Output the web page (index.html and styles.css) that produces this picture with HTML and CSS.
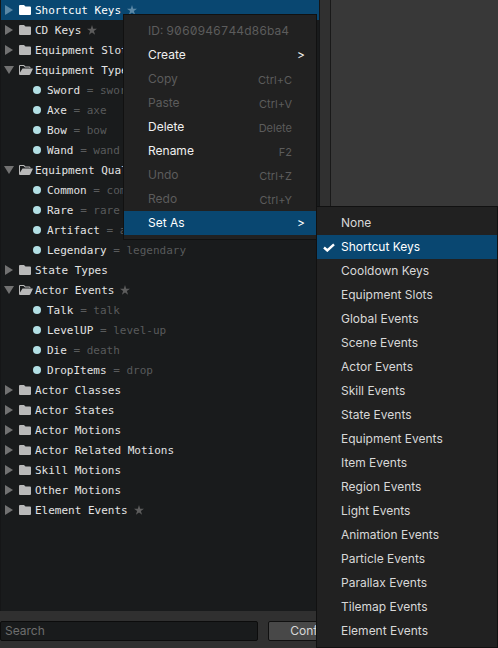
FILE: index.html
```html
<!DOCTYPE html>
<html lang="en">
<head>
<meta charset="utf-8">
<title>Attributes</title>
<link rel="stylesheet" href="styles.css">
</head>
<body>
<svg class="symbols" aria-hidden="true">
  <symbol id="closed" viewBox="0 0 10 10"><path d="M1 0L9 5L1 10Z"/></symbol>
  <symbol id="open" viewBox="0 0 10 8"><path d="M0 0H10L5 8Z"/></symbol>
  <symbol id="folder" viewBox="0 0 14 10"><path d="M0 1Q0 0 1 0H5L6.500 1.500H11Q12 1.500 12 2.500V9Q12 10 11 10H1Q0 10 0 9Z"/></symbol>
  <symbol id="folder-open" viewBox="0 0 14 10"><path d="M0 1Q0 0 1 0H5L6.500 1.500H10.500Q11.500 1.500 11.500 3H10.500V2.500H6L4.500 1H1V7.500L3.500 3.500H13.500Q14 3.500 13.700 4.200L11.300 9.300Q11 10 10.200 10H1Q0 10 0 9Z"/></symbol>
  <symbol id="star" viewBox="0 0 10 10"><path d="M5 0L6.200 3.700H10L6.900 6L8.100 9.700L5 7.400L1.900 9.700L3.100 6L0 3.700H3.800Z"/></symbol>
  <symbol id="check" viewBox="0 0 12 9"><path d="M1 4.500L4.300 7.500L11 1.300" fill="none" stroke="currentColor" stroke-width="2.400"/></symbol>
</svg>
<main class="window">
  <section class="sidebar">
    <ul class="tree">
      <li class="row selected"><svg class="arrow"><use href="#closed"/></svg><svg class="folder"><use href="#folder"/></svg><span>Shortcut Keys</span><svg class="star"><use href="#star"/></svg></li>
      <li class="row"><svg class="arrow"><use href="#closed"/></svg><svg class="folder"><use href="#folder"/></svg><span>CD Keys</span><svg class="star"><use href="#star"/></svg></li>
      <li class="row"><svg class="arrow"><use href="#closed"/></svg><svg class="folder"><use href="#folder"/></svg><span>Equipment Slots</span></li>
      <li class="row"><svg class="arrow"><use href="#open"/></svg><svg class="folder"><use href="#folder-open"/></svg><span>Equipment Types</span></li>
      <li class="row leaf"><i class="dot"></i><span>Sword <em>= sword</em></span></li>
      <li class="row leaf"><i class="dot"></i><span>Axe <em>= axe</em></span></li>
      <li class="row leaf"><i class="dot"></i><span>Bow <em>= bow</em></span></li>
      <li class="row leaf"><i class="dot"></i><span>Wand <em>= wand</em></span></li>
      <li class="row"><svg class="arrow"><use href="#open"/></svg><svg class="folder"><use href="#folder-open"/></svg><span>Equipment Qualities</span></li>
      <li class="row leaf"><i class="dot"></i><span>Common <em>= common</em></span></li>
      <li class="row leaf"><i class="dot"></i><span>Rare <em>= rare</em></span></li>
      <li class="row leaf"><i class="dot"></i><span>Artifact <em>= artifact</em></span></li>
      <li class="row leaf"><i class="dot"></i><span>Legendary <em>= legendary</em></span></li>
      <li class="row"><svg class="arrow"><use href="#closed"/></svg><svg class="folder"><use href="#folder"/></svg><span>State Types</span></li>
      <li class="row"><svg class="arrow"><use href="#open"/></svg><svg class="folder"><use href="#folder-open"/></svg><span>Actor Events</span><svg class="star"><use href="#star"/></svg></li>
      <li class="row leaf"><i class="dot"></i><span>Talk <em>= talk</em></span></li>
      <li class="row leaf"><i class="dot"></i><span>LevelUP <em>= level-up</em></span></li>
      <li class="row leaf"><i class="dot"></i><span>Die <em>= death</em></span></li>
      <li class="row leaf"><i class="dot"></i><span>DropItems <em>= drop</em></span></li>
      <li class="row"><svg class="arrow"><use href="#closed"/></svg><svg class="folder"><use href="#folder"/></svg><span>Actor Classes</span></li>
      <li class="row"><svg class="arrow"><use href="#closed"/></svg><svg class="folder"><use href="#folder"/></svg><span>Actor States</span></li>
      <li class="row"><svg class="arrow"><use href="#closed"/></svg><svg class="folder"><use href="#folder"/></svg><span>Actor Motions</span></li>
      <li class="row"><svg class="arrow"><use href="#closed"/></svg><svg class="folder"><use href="#folder"/></svg><span>Actor Related Motions</span></li>
      <li class="row"><svg class="arrow"><use href="#closed"/></svg><svg class="folder"><use href="#folder"/></svg><span>Skill Motions</span></li>
      <li class="row"><svg class="arrow"><use href="#closed"/></svg><svg class="folder"><use href="#folder"/></svg><span>Other Motions</span></li>
      <li class="row"><svg class="arrow"><use href="#closed"/></svg><svg class="folder"><use href="#folder"/></svg><span>Element Events</span><svg class="star"><use href="#star"/></svg></li>
    </ul>
  </section>
  <section class="detail"></section>
  <footer class="footer">
    <input class="search" type="text" placeholder="Search" aria-label="Search">
    <button class="confirm" type="button">Confirm</button>
  </footer>
</main>
<div class="menu context">
  <button class="item" type="button" disabled><span class="id">ID: 9060946744d86ba4</span></button>
  <button class="item" type="button"><span>Create</span><span class="more">&gt;</span></button>
  <button class="item" type="button" disabled><span>Copy</span><kbd>Ctrl+C</kbd></button>
  <button class="item" type="button" disabled><span>Paste</span><kbd>Ctrl+V</kbd></button>
  <button class="item" type="button"><span>Delete</span><kbd>Delete</kbd></button>
  <button class="item" type="button"><span>Rename</span><kbd>F2</kbd></button>
  <button class="item" type="button" disabled><span>Undo</span><kbd>Ctrl+Z</kbd></button>
  <button class="item" type="button" disabled><span>Redo</span><kbd>Ctrl+Y</kbd></button>
  <button class="item active" type="button"><span>Set As</span><span class="more">&gt;</span></button>
</div>
<div class="menu submenu">
  <button class="item" type="button">None</button>
  <button class="item active" type="button"><svg class="check"><use href="#check"/></svg>Shortcut Keys</button>
  <button class="item" type="button">Cooldown Keys</button>
  <button class="item" type="button">Equipment Slots</button>
  <button class="item" type="button">Global Events</button>
  <button class="item" type="button">Scene Events</button>
  <button class="item" type="button">Actor Events</button>
  <button class="item" type="button">Skill Events</button>
  <button class="item" type="button">State Events</button>
  <button class="item" type="button">Equipment Events</button>
  <button class="item" type="button">Item Events</button>
  <button class="item" type="button">Region Events</button>
  <button class="item" type="button">Light Events</button>
  <button class="item" type="button">Animation Events</button>
  <button class="item" type="button">Particle Events</button>
  <button class="item" type="button">Parallax Events</button>
  <button class="item" type="button">Tilemap Events</button>
  <button class="item" type="button">Element Events</button>
</div>
</body>
</html>
```
FILE: styles.css
```css
* {
  box-sizing: border-box;
}

body {
  margin: 0;
  overflow: hidden;
  background: #303030;
  color: #d8d8d8;
  font: 12px/20px Inter, "Liberation Sans", sans-serif;
}

.symbols {
  position: absolute;
  width: 0;
  height: 0;
}

.window {
  display: grid;
  grid-template-columns: 320px 1fr;
  grid-template-rows: 1fr auto;
  column-gap: 10px;
  height: 100vh;
}

.sidebar {
  background: #191b1c;
  border: 1px solid #151617;
  border-width: 0 1px;
}

.detail {
  background: #383838;
  border-left: 1px solid #191919;
}

.footer {
  grid-column: 1 / -1;
  display: flex;
  gap: 10px;
  padding: 10px 0 7px;
}

.tree {
  margin: 0;
  padding: 0;
  list-style: none;
  font: 11px/20px "DejaVu Sans Mono", monospace;
}

.row {
  display: flex;
  align-items: center;
  height: 20px;
  padding-left: 3px;
  color: #e4e4e4;
  white-space: nowrap;
}

.row span {
  padding-top: 2px;
}

.row svg {
  flex: none;
  fill: currentColor;
}

.row .arrow {
  width: 10px;
  height: 10px;
  margin-right: 5px;
  color: #727272;
}

.row .folder {
  width: 14px;
  height: 10px;
  margin-right: 2px;
  color: #b9b9b9;
}

.row .star {
  width: 10px;
  height: 10px;
  margin-left: 6px;
  color: #5c5c5c;
}

.row.selected {
  background: #094771;
  color: #fff;
}

.selected .arrow,
.selected .star {
  color: #5b88a6;
}

.selected .folder {
  color: #fff;
}

.leaf {
  padding-left: 32px;
}

.dot {
  width: 8px;
  height: 8px;
  margin-right: 6px;
  border-radius: 50%;
  background: #b2dfe4;
}

.row em {
  color: #585a5b;
  font-style: normal;
}

.search {
  width: 258px;
  height: 20px;
  padding: 0 4px;
  border: 1px solid #0c0c0c;
  border-radius: 2px;
  background: #191b1c;
  color: #d8d8d8;
  font: inherit;
}

.search::placeholder {
  color: #6e6e6e;
}

.confirm {
  width: 90px;
  height: 20px;
  padding: 0;
  border: 1px solid #101010;
  border-radius: 2px;
  background: #484848;
  color: #d8d8d8;
  font: inherit;
  line-height: 18px;
}

.menu {
  position: absolute;
  padding: 4px 0;
  border: 1px solid #111;
  background: #212121;
}

.context {
  top: 14px;
  left: 123px;
  width: 194px;
}

.submenu {
  top: 206px;
  left: 316px;
  width: 182px;
}

.item {
  position: relative;
  display: flex;
  align-items: center;
  justify-content: space-between;
  width: 100%;
  height: 24px;
  padding: 0 24px;
  border: 0;
  background: none;
  color: #d8d8d8;
  font: inherit;
  white-space: nowrap;
}

.context .item {
  color: #f0f0f0;
}

.menu .item:disabled {
  color: #5c5c5c;
}

.menu .item.active {
  background: #094771;
  color: #fff;
}

.item kbd {
  padding-top: 2px;
  color: #5c5c5c;
  font: inherit;
  font-size: 11px;
}

.id {
  font-feature-settings: "zero", "tnum";
}

.more {
  position: absolute;
  right: 11px;
}

.check {
  position: absolute;
  left: 6px;
  width: 12px;
  height: 9px;
}
```
